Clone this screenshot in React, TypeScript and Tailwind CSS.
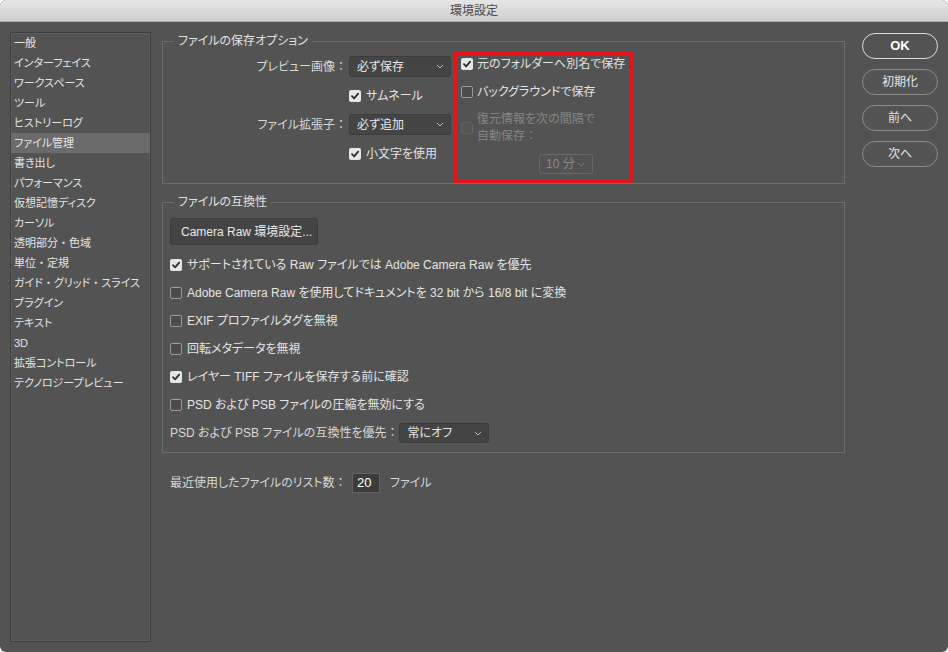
import React from "react";

type CheckState = "on" | "off" | "disabled";

const menu = [
  "一般",
  "インターフェイス",
  "ワークスペース",
  "ツール",
  "ヒストリーログ",
  "ファイル管理",
  "書き出し",
  "パフォーマンス",
  "仮想記憶ディスク",
  "カーソル",
  "透明部分・色域",
  "単位・定規",
  "ガイド・グリッド・スライス",
  "プラグイン",
  "テキスト",
  "3D",
  "拡張コントロール",
  "テクノロジープレビュー",
];

const compat: { label: string; on: boolean }[] = [
  { label: "サポートされている Raw ファイルでは Adobe Camera Raw を優先", on: true },
  { label: "Adobe Camera Raw を使用してドキュメントを 32 bit から 16/8 bit に変換", on: false },
  { label: "EXIF プロファイルタグを無視", on: false },
  { label: "回転メタデータを無視", on: false },
  { label: "レイヤー TIFF ファイルを保存する前に確認", on: true },
  { label: "PSD および PSB ファイルの圧縮を無効にする", on: false },
];

// full-width colon and middle dot keep their full width (no palt)
const jp = (s: string) =>
  s.split(/([：・])/).map((p, i) =>
    p === "：" || p === "・" ? (
      <span key={i} className="[font-feature-settings:normal]">
        {p}
      </span>
    ) : (
      p
    )
  );

const Box: React.FC<{ state: CheckState }> = ({ state }) => {
  if (state === "on") {
    return (
      <span className="w-[12px] h-[12px] shrink-0 rounded-[2px] bg-[#e6e6e6] flex items-center justify-center">
        <svg width="10" height="10" viewBox="0 0 10 10">
          <path d="M2 5.2 L4.1 7.3 L8.2 2.6" fill="none" stroke="#2e2e2e" strokeWidth="1.8" strokeLinecap="round" strokeLinejoin="round" />
        </svg>
      </span>
    );
  }
  if (state === "disabled") {
    return <span className="w-[12px] h-[12px] shrink-0 rounded-[2px] border border-[#626262] bg-[#575757]" />;
  }
  return <span className="w-[12px] h-[12px] shrink-0 rounded-[2px] border border-[#9a9a9a] bg-[#4c4c4c]" />;
};

const Chevron: React.FC<{ color?: string }> = ({ color = "#bdbdbd" }) => (
  <svg width="8" height="5" viewBox="0 0 8 5">
    <path d="M1 1 L4 4 L7 1" fill="none" stroke={color} strokeWidth="1" />
  </svg>
);

const Select: React.FC<{ value: string; className: string; disabled?: boolean }> = ({
  value,
  className,
  disabled,
}) => (
  <div
    className={`${className} shrink-0 flex items-center justify-between rounded-[3px] ${
      disabled
        ? "pl-[6px] pr-[7px] border border-[#666666] text-[#8a8a8a]"
        : "pl-[7px] pr-[6px] bg-[#444444] border border-[#3c3c3c] text-[#e8e8e8]"
    }`}
  >
    <span className="whitespace-nowrap">{value}</span>
    <Chevron color={disabled ? "#7a7a7a" : "#bdbdbd"} />
  </div>
);

const Legend: React.FC<{ text: string }> = ({ text }) => (
  <legend className="ml-[4px] px-[4px] text-[12px] leading-[16px] text-[#e2e2e2]">{text}</legend>
);

const RoundButton: React.FC<{ label: string; primary?: boolean }> = ({ label, primary }) => (
  <button
    className={`w-[76px] h-[26px] rounded-full flex items-center justify-center ${
      primary
        ? "border-[1.5px] border-[#dcdcdc] text-[13px] font-bold text-white"
        : "border border-[#8c8c8c] text-[12px] text-[#e4e4e4]"
    }`}
  >
    {label}
  </button>
);

export default function App() {
  return (
    <div className="w-[948px] h-[652px] bg-white font-['Liberation_Sans','Noto_Sans_CJK_JP',sans-serif] [font-feature-settings:'palt']">
      <div className="w-full h-full rounded-[6px] overflow-hidden bg-[#535353] flex flex-col">
        {/* title bar */}
        <div className="h-[22px] shrink-0 bg-gradient-to-b from-[#e6e6e6] to-[#cfcfcf] border-b border-[#a9a9a9] flex items-center justify-center">
          <span className="text-[12px] text-[#4a4a4a]">環境設定</span>
        </div>

        <div className="flex pt-[10px]">
          {/* sidebar */}
          <div className="ml-[10px] w-[141px] h-[610px] border border-[#404040] shadow-[inset_0_0_0_1px_#5c5c5c]">
            {menu.map((m) => (
              <div
                key={m}
                className={`h-[20px] pl-[3px] flex items-center whitespace-nowrap text-[11px] text-[#e4e4e4] ${
                  m === "ファイル管理" ? "bg-[#6b6b6b]" : ""
                }`}
              >
                {jp(m)}
              </div>
            ))}
          </div>

          {/* main */}
          <div className="ml-[11px] w-[683px] mt-[1px] text-[12px] text-[#e4e4e4]">
            <fieldset className="border border-[#6c6c6c] pl-[7px]">
              <Legend text="ファイルの保存オプション" />
              <div className="flex items-start">
                <div className="mt-[7px] grid grid-cols-[177px_102px] gap-x-[2px] gap-y-[8px] auto-rows-[21px]">
                  <div className="flex items-center justify-end text-[#d8d8d8]">{jp("プレビュー画像：")}</div>
                  <Select value="必ず保存" className="h-[21px]" />
                  <div />
                  <div className="flex items-center gap-[5px]">
                    <Box state="on" />
                    <span>サムネール</span>
                  </div>
                  <div className="flex items-center justify-end text-[#d8d8d8]">{jp("ファイル拡張子：")}</div>
                  <Select value="必ず追加" className="h-[21px]" />
                  <div />
                  <div className="flex items-center gap-[5px]">
                    <Box state="on" />
                    <span>小文字を使用</span>
                  </div>
                </div>

                <div className="mt-[2px] ml-[2px] w-[180px] h-[132px] border-4 border-[#e8141c] rounded-[3px] pl-[4px] flex flex-col">
                  <div className="h-[18px] flex items-center gap-[4px]">
                    <Box state="on" />
                    <span className="whitespace-nowrap">元のフォルダーへ別名で保存</span>
                  </div>
                  <div className="mt-[10px] h-[18px] flex items-center gap-[4px]">
                    <Box state="off" />
                    <span>バックグラウンドで保存</span>
                  </div>
                  <div className="mt-[10px] flex items-center gap-[4px] text-[#858585]">
                    <Box state="disabled" />
                    <span className="leading-[17px]">
                      復元情報を次の間隔で
                      <br />
                      {jp("自動保存：")}
                    </span>
                  </div>
                  <Select value="10 分" disabled className="mt-[9px] ml-[78px] w-[54px] h-[20px]" />
                </div>
              </div>
            </fieldset>

            <fieldset className="mt-[10px] border border-[#6c6c6c] pl-[7px] pb-[5px]">
              <Legend text="ファイルの互換性" />
              <button className="mt-[8px] w-[148px] h-[27px] rounded-[3px] bg-[#444444] border border-[#3c3c3c] text-left pl-[10px] text-[12px] text-[#e8e8e8]">
                Camera Raw 環境設定...
              </button>
              <div className="mt-[6px] flex flex-col">
                {compat.map((c) => (
                  <div key={c.label} className="h-[28px] flex items-center gap-[5px]">
                    <Box state={c.on ? "on" : "off"} />
                    <span className="whitespace-nowrap">{c.label}</span>
                  </div>
                ))}
                <div className="h-[28px] flex items-center gap-[1px]">
                  <span className="whitespace-nowrap text-[#d8d8d8]">{jp("PSD および PSB ファイルの互換性を優先：")}</span>
                  <Select value="常にオフ" className="w-[90px] h-[20px]" />
                </div>
              </div>
            </fieldset>

            <div className="mt-[20px] pl-[8px] h-[20px] flex items-center">
              <span className="w-[182px] shrink-0 whitespace-nowrap text-[#d8d8d8]">
                {jp("最近使用したファイルのリスト数：")}
              </span>
              <div className="w-[28px] h-[20px] bg-[#3b3b3b] border border-[#626262] flex items-center pl-[4px] text-[13px] text-white">
                20
              </div>
              <span className="ml-[10px] text-[#d8d8d8]">ファイル</span>
            </div>
          </div>

          {/* buttons */}
          <div className="ml-[17px] mt-[1px] flex flex-col gap-[10px]">
            <RoundButton label="OK" primary />
            <RoundButton label="初期化" />
            <RoundButton label="前へ" />
            <RoundButton label="次へ" />
          </div>
        </div>
      </div>
    </div>
  );
}
